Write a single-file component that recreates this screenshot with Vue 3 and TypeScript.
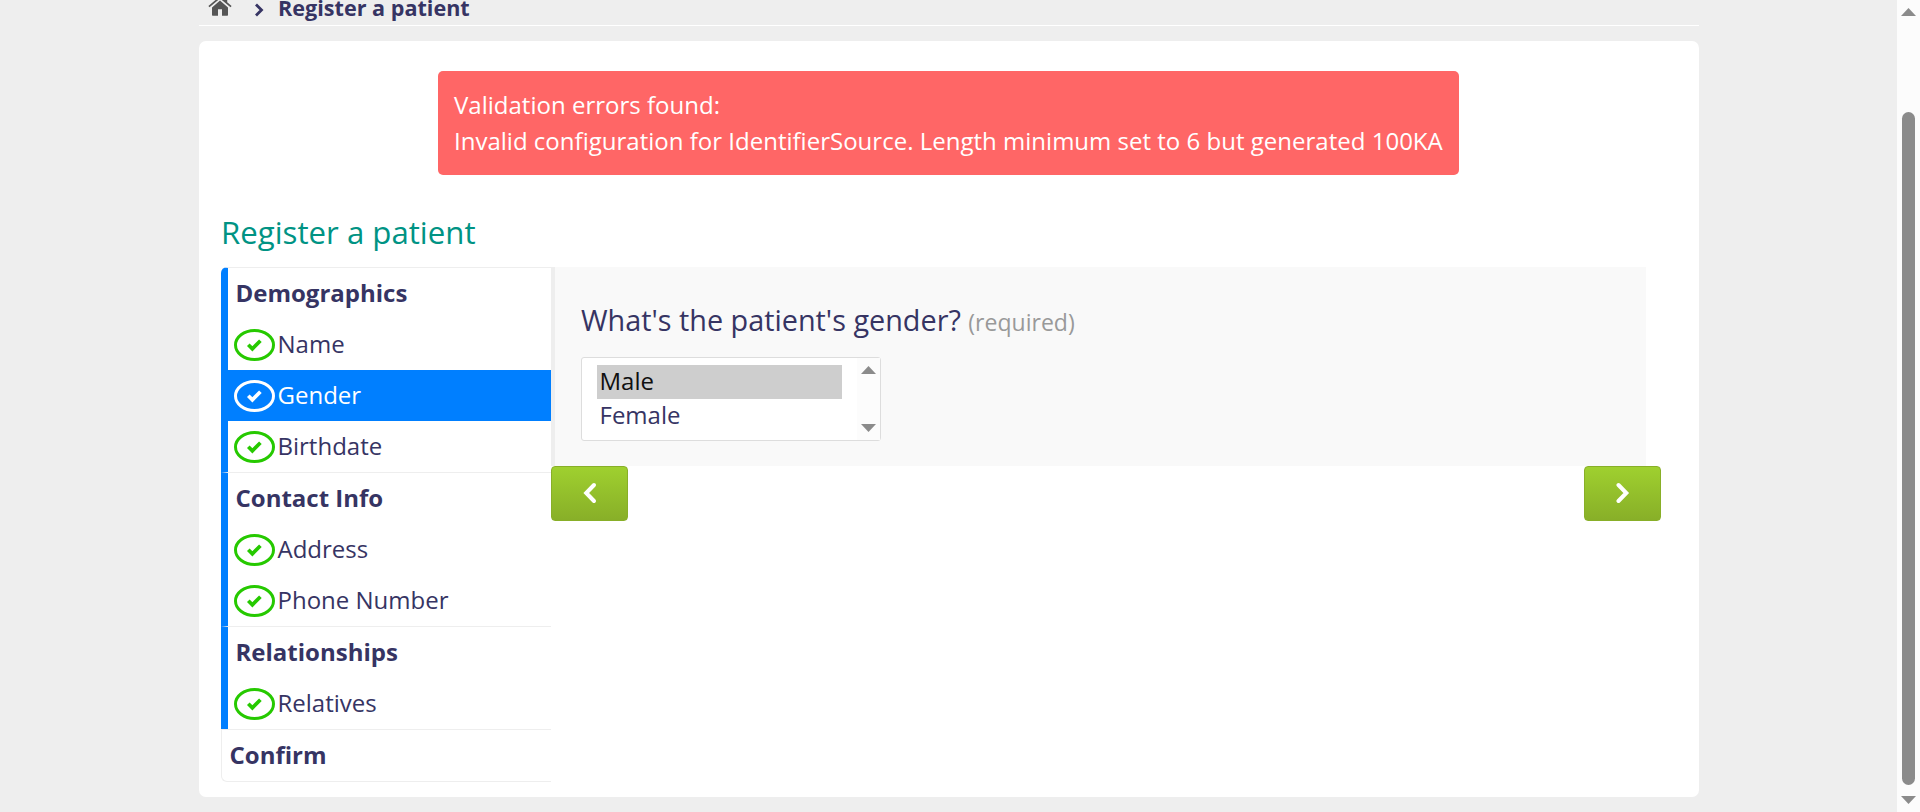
<script setup lang="ts">
import { ref } from 'vue'

interface Section {
  title: string
  questions: string[]
}

const sections: Section[] = [
  { title: 'Demographics', questions: ['Name', 'Gender', 'Birthdate'] },
  { title: 'Contact Info', questions: ['Address', 'Phone Number'] },
  { title: 'Relationships', questions: ['Relatives'] },
]

const current = ref('Gender')
const genders = ['Male', 'Female']
const selected = ref('Male')
</script>

<template>
  <div class="page">
    <div class="viewport">
      <nav class="breadcrumbs">
        <svg class="home" viewBox="0 0 24 21">
          <path d="M4 12.4 12 5.6l8 6.8V20q0 .7-.7.7H14v-6.4h-4v6.4H4.700q-.7 0-.7-.7z" />
          <path d="M.4 11 12 1.200 15.800 4.400V1.900h3.400v5.400L23.600 11l-1.100 1.300L12 3.500 1.500 12.300z" />
        </svg>
        <svg class="sep" viewBox="0 0 10 14"><path d="M2 1.500 7.500 7 2 12.500" /></svg>
        <span class="crumb">Register a patient</span>
      </nav>
      <main class="card">
        <div class="error">
          <p>Validation errors found:</p>
          <p>Invalid configuration for IdentifierSource. Length minimum set to 6 but generated 100KA</p>
        </div>
        <h2>Register a patient</h2>
        <div class="form">
          <ul class="steps">
            <li v-for="s in sections" :key="s.title" class="section">
              <span class="title">{{ s.title }}</span>
              <ul>
                <li
                  v-for="q in s.questions"
                  :key="q"
                  class="question"
                  :class="{ active: q === current }"
                  @click="current = q"
                >
                  <svg class="tick" viewBox="0 0 41 32">
                    <ellipse cx="20.500" cy="16" rx="19" ry="14.500" />
                    <path d="M14.300 15.700l4.100 4.100 8-8" />
                  </svg>
                  <span>{{ q }}</span>
                </li>
              </ul>
            </li>
            <li class="section confirm"><span class="title">Confirm</span></li>
          </ul>
          <div class="content">
            <section class="panel">
              <h3>What's the patient's gender? <span class="required">(required)</span></h3>
              <div class="listbox">
                <div class="options">
                  <div
                    v-for="g in genders"
                    :key="g"
                    class="option"
                    :class="{ selected: g === selected }"
                    @click="selected = g"
                  >{{ g }}</div>
                </div>
                <div class="listbar">
                  <i class="up"></i>
                  <i class="down"></i>
                </div>
              </div>
            </section>
            <div class="buttons">
              <button type="button"><svg viewBox="0 0 14 22"><path d="M11 3 3.200 11 11 19" /></svg></button>
              <button type="button"><svg viewBox="0 0 14 22"><path d="M2.500 3l7.800 8-7.800 8" /></svg></button>
            </div>
          </div>
        </div>
      </main>
    </div>
    <div class="scrollbar">
      <i class="up"></i>
      <div class="thumb"></div>
      <i class="down"></i>
    </div>
  </div>
</template>

<style>
body {
  margin: 0;
  overflow: hidden;
}
</style>

<style scoped>
* {
  box-sizing: border-box;
}
.page {
  display: flex;
  height: 812px;
  background: #eeeeee;
  color: #363463;
  font-family: "Open Sans", "Noto Sans", sans-serif;
  font-size: 24px;
}
.viewport {
  flex: 1;
  padding-left: 199px;
}
.breadcrumbs {
  display: flex;
  width: 1500px;
  height: 26px;
  border-bottom: 1px solid #fff;
}
.home {
  width: 24px;
  height: 21px;
  margin: -5px 0 0 9px;
  fill: #555;
}
.sep {
  width: 10px;
  height: 14px;
  margin: 3px 0 0 22px;
  fill: none;
  stroke: #363463;
  stroke-width: 2.800;
}
.crumb {
  margin: -6px 0 0 14px;
  font-size: 21.600px;
  font-weight: 700;
  line-height: 28px;
  white-space: nowrap;
}
.card {
  width: 1500px;
  height: 756px;
  margin-top: 15px;
  padding: 30px 22px 0;
  border-radius: 7px;
  background: #fff;
}
.error {
  width: 1021px;
  height: 104px;
  margin: 0 0 0 217px;
  padding: 16px;
  border-radius: 5px;
  background: #f66;
  color: #fff;
  letter-spacing: 0.010px;
  white-space: nowrap;
}
p {
  margin: 0;
  line-height: 36px;
}
h2 {
  height: 92px;
  margin: 0;
  padding-top: 36px;
  color: #009384;
  font-size: 31.200px;
  font-weight: 400;
  line-height: 42px;
}
.form {
  display: flex;
}
ul {
  margin: 0;
  padding: 0;
  list-style: none;
}
.steps {
  width: 330px;
}
.section {
  border-top: 1px solid #eee;
  border-left: 7px solid #007fff;
}
.section:first-child {
  border-top-left-radius: 6px;
}
.title {
  display: block;
  height: 51px;
  padding-left: 7.500px;
  font-weight: 700;
  line-height: 49px;
}
.confirm {
  height: 53px;
  border-left: 1px solid #eee;
  border-bottom: 1px solid #eee;
  border-bottom-left-radius: 6px;
}
.question {
  display: flex;
  align-items: center;
  height: 51px;
  padding-left: 6px;
}
.question.active {
  background: #007fff;
  color: #fff;
}
.question span {
  height: 35px;
  margin-left: 2.500px;
  line-height: 33px;
}
.tick {
  width: 41px;
  height: 32px;
  fill: none;
  stroke: #26c900;
  stroke-width: 3;
}
.tick path {
  stroke-width: 3.700;
}
.active .tick {
  stroke: #fff;
}
.content {
  width: 1110px;
}
.panel {
  width: 1095px;
  height: 199px;
  padding: 32px 0 0 26px;
  border-left: 4px solid #eee;
  background: #f9f9f9;
}
h3 {
  height: 58px;
  margin: 0;
  font-size: 28.800px;
  font-weight: 400;
  line-height: 42px;
}
.required {
  color: #999;
  font-size: 23.040px;
}
.listbox {
  display: flex;
  width: 300px;
  height: 84px;
  border: 1px solid #ddd;
  border-radius: 3px;
  background: #fff;
}
.options {
  flex: 1;
  padding: 7px 15px 0;
}
.option {
  height: 34px;
  padding-left: 2.500px;
  line-height: 31px;
}
.option.selected {
  background: #cecece;
  color: #101010;
}
.listbar {
  display: flex;
  flex-direction: column;
  justify-content: space-between;
  align-items: center;
  width: 23px;
  padding: 8px 0;
  background: #fcfcfc;
}
.up,
.down {
  width: 15px;
  height: 8px;
  background: #8b8b8b;
}
.up {
  clip-path: polygon(50% 0, 100% 100%, 0 100%);
}
.down {
  clip-path: polygon(0 0, 100% 0, 50% 100%);
}
.buttons {
  display: flex;
  justify-content: space-between;
}
button {
  display: flex;
  align-items: center;
  justify-content: center;
  width: 77px;
  height: 55px;
  padding: 0 0 1px;
  border: 1px solid #88af28;
  border-radius: 4px;
  background: linear-gradient(#9fd02f, #88af28);
}
button svg {
  width: 14px;
  height: 22px;
  fill: none;
  stroke: #fff;
  stroke-width: 4;
  stroke-linecap: round;
}
.scrollbar {
  display: flex;
  flex-direction: column;
  align-items: center;
  width: 23px;
  padding: 8px 0;
  background: #fcfcfc;
}
.thumb {
  width: 13px;
  height: 673px;
  margin: 96px 0 11px;
  border-radius: 7px;
  background: #8b8b8b;
}
</style>
